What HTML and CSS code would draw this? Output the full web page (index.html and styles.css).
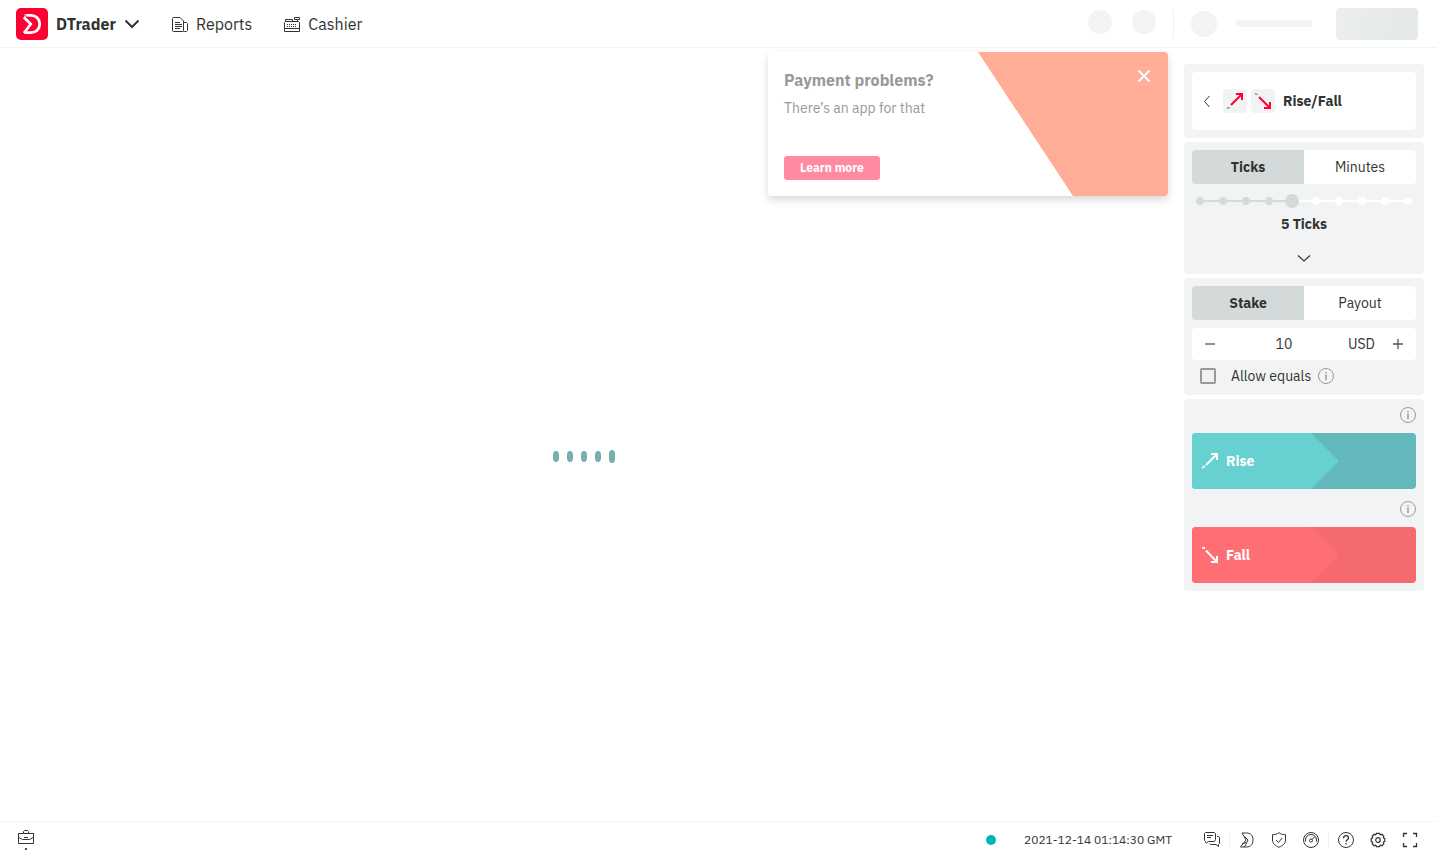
FILE: index.html
```html
<!DOCTYPE html>
<html lang="en">
<head>
<meta charset="utf-8">
<meta name="viewport" content="width=device-width, initial-scale=1">
<title>DTrader</title>
<link rel="stylesheet" href="styles.css">
</head>
<body>
<header class="header">
  <button class="platform" type="button">
    <svg class="platform-logo" viewBox="0 0 32 32" aria-hidden="true"><rect width="32" height="32" rx="5" fill="#ff0032"/><g fill="none" stroke="#fff" stroke-width="2.800"><path d="M8.500 7.400H15c5 0 8.700 3.400 8.700 8.600S20 24.600 15 24.600H8.500"/><path d="M7.800 9.300 14.800 16 8 25"/></g><path d="M8 5.500 17 16" stroke="#ff0032" stroke-width=".8"/></svg>
    <span>DTrader</span>
    <svg class="icon" viewBox="0 0 16 16" aria-hidden="true"><path d="M1.500 4.500 8 11l6.500-6.500" stroke-width="2"/></svg>
  </button>
  <nav class="nav">
    <a class="nav-link" href="#reports">
      <svg class="icon" viewBox="0 0 16 16" aria-hidden="true"><path d="M11.500 15.500h-10a1 1 0 0 1-1-1V2.500a1 1 0 0 1 1-1H8L11.500 5v9.500a1 1 0 0 0 1 1h2l1-1v-7l-1-1h-3M3 6.500h5M3 8.500h7M3 10.500h7M3 12.500h5"/></svg>
      Reports
    </a>
    <a class="nav-link" href="#cashier">
      <svg class="icon" viewBox="0 0 16 16" aria-hidden="true"><path d="M.5 12.500v-6l1-1V3.500h7v2M1.500 5.500h13l1 1v9H.5v-3h15M10.500 1.500h5v2h-5zM13.500 3.500v2"/><path d="M3 8.500h10M3 10.500h10" stroke-dasharray="1 1"/></svg>
      Cashier
    </a>
  </nav>
  <div class="account" aria-hidden="true">
    <span class="bone bone-dot"></span>
    <span class="bone bone-dot"></span>
    <span class="account-divider"></span>
    <span class="bone bone-avatar"></span>
    <span class="bone bone-line"></span>
    <span class="bone bone-button"></span>
  </div>
</header>

<main class="trade">
  <section class="chart" aria-label="Chart">
    <div class="loader" role="status" aria-label="Loading"><i></i><i></i><i></i><i></i><i></i></div>
    <aside class="banner">
      <svg class="banner-art" viewBox="0 0 190 144" preserveAspectRatio="none" aria-hidden="true"><path d="M0 0h190v144H95z" fill="#ffad97"/></svg>
      <h2 class="banner-title">Payment problems?</h2>
      <p class="banner-text">There’s an app for that</p>
      <button class="banner-action" type="button">Learn more</button>
      <button class="banner-close" type="button" aria-label="Close"><svg class="icon" viewBox="0 0 16 16"><path d="m2.500 2.500 11 11m0-11-11 11" stroke-width="2"/></svg></button>
    </aside>
  </section>

  <form class="sidebar">
    <section class="panel">
      <button class="contract" type="button">
        <svg class="icon" viewBox="0 0 16 16" aria-hidden="true"><path d="M10.500 3 5.500 8.500l5 5.500"/></svg>
        <span class="contract-icons">
          <svg class="contract-icon" viewBox="0 0 24 24" aria-hidden="true"><path d="M4 18h3v1.200H5.500V20H4z" fill="#77afb1"/><path d="M8 16 18.500 5.500M13 5h6v6" fill="none" stroke="#ff0032" stroke-width="2"/></svg>
          <svg class="contract-icon" viewBox="0 0 24 24" aria-hidden="true"><path d="M4 4h1.500v.8H7V6H4z" fill="#77afb1"/><path d="M8 8 18.500 18.500M13 19h6v-6" fill="none" stroke="#ff0032" stroke-width="2"/></svg>
        </span>
        <span>Rise/Fall</span>
      </button>
    </section>

    <section class="panel">
      <div class="tabs">
        <button class="tab tab-active" type="button">Ticks</button>
        <button class="tab" type="button">Minutes</button>
      </div>
      <div class="duration">
        <div class="duration-dots" aria-hidden="true"><i class="on"></i><i class="on"></i><i class="on"></i><i class="on"></i><i class="on"></i><i></i><i></i><i></i><i></i><i></i></div>
        <input class="duration-range" id="duration" type="range" min="1" max="10" value="5">
      </div>
      <label class="duration-label" for="duration">5 Ticks</label>
      <button class="expand" type="button" aria-label="Expand"><svg class="icon" viewBox="0 0 16 16"><path d="M2 5.500 8 11l6-5.500" stroke-width="1.200"/></svg></button>
    </section>

    <section class="panel">
      <div class="tabs">
        <button class="tab tab-active" type="button">Stake</button>
        <button class="tab" type="button">Payout</button>
      </div>
      <div class="amount">
        <button class="amount-step" type="button" aria-label="Decrease"><svg class="icon" viewBox="0 0 16 16"><path d="M3 8h10" stroke-width="1.300"/></svg></button>
        <input class="amount-input" type="text" value="10" aria-label="Stake amount">
        <span class="amount-currency">USD</span>
        <button class="amount-step" type="button" aria-label="Increase"><svg class="icon" viewBox="0 0 16 16"><path d="M3 8h10M8 3v10" stroke-width="1.300"/></svg></button>
      </div>
      <div class="equals">
        <input class="equals-box" id="equals" type="checkbox">
        <label for="equals">Allow equals</label>
        <svg class="icon info" viewBox="0 0 16 16" aria-hidden="true"><circle cx="8" cy="8" r="7.500"/><path d="M8 6.500V12M8 4v1.200" stroke-width="1.500"/></svg>
      </div>
    </section>

    <section class="panel">
      <div class="purchase">
        <svg class="icon info" viewBox="0 0 16 16" aria-hidden="true"><circle cx="8" cy="8" r="7.500"/><path d="M8 6.500V12M8 4v1.200" stroke-width="1.500"/></svg>
        <button class="buy buy-rise" type="button">
          <span class="buy-main"><svg class="icon" viewBox="0 0 16 16" aria-hidden="true"><path d="M0 14.500h1.500M1.500 13.500H3M4 12 14.500 1.500M9 1h6v6" stroke-width="2"/></svg>Rise</span>
        </button>
      </div>
      <div class="purchase">
        <svg class="icon info" viewBox="0 0 16 16" aria-hidden="true"><circle cx="8" cy="8" r="7.500"/><path d="M8 6.500V12M8 4v1.200" stroke-width="1.500"/></svg>
        <button class="buy buy-fall" type="button">
          <span class="buy-main"><svg class="icon" viewBox="0 0 16 16" aria-hidden="true"><path d="M0 .5h1.500M1.500 1H3M4 3.500 14.500 14.500M9 15h6V9" stroke-width="2"/></svg>Fall</span>
        </button>
      </div>
    </section>
  </form>
</main>

<footer class="footer">
  <button class="footer-button positions" type="button" aria-label="Positions">
    <svg class="icon" viewBox="0 0 16 16"><path d="M.5 3.500h15v10H.5zM5.500 3.500v-2l1-1h3l1 1v2M.5 7c2 2 4 2.500 5.500 2.500h4c1.500 0 3.500-.5 5.500-2.500M6 7.500h4"/></svg>
    <span class="positions-dot"></span>
  </button>
  <span class="network" role="img" aria-label="Online"></span>
  <time class="clock" datetime="2021-12-14T01:14:30Z">2021-12-14 01:14:30 GMT</time>
  <div class="footer-group">
    <button class="footer-button" type="button" aria-label="Live chat"><svg class="icon" viewBox="0 0 16 16"><path d="M1.500 10.500v-1l-1-1v-7l1-1h9l1 1v6l-1 2H4.500l-2 1.500zM3 3.500h6M3 5.500h4M13 4.500h1.500l1 1v6l-1 1v2L12 12.500H6.500l-1-1"/></svg></button>
  </div>
  <div class="footer-group">
    <a class="footer-button" href="#deriv" aria-label="Deriv"><svg class="icon" viewBox="0 0 16 16"><path d="M3 1h4.500C11.500 1 14 3.500 14 8s-2.500 7-6.500 7H1.500L7 8zM5.500 4.500 9 8l-3.500 7M3 12l4-1.500"/></svg></a>
    <a class="footer-button" href="#limits" aria-label="Responsible trading"><svg class="icon" viewBox="0 0 16 16"><path d="M8 .7C6 2.200 4 2.700 1.500 2.700V8c0 3.500 2.500 5.500 6.500 7.300 4-1.800 6.500-3.800 6.500-7.300V2.700C12 2.700 10 2.200 8 .7zM5 8l2.500 2.500L11 6"/></svg></a>
    <a class="footer-button" href="#account-limits" aria-label="Account limits"><svg class="icon" viewBox="0 0 16 16"><circle cx="8" cy="8" r="7.500"/><path d="M2.500 9.500V8a5.500 5.500 0 0 1 11 0v1.500M9 7.500l2.500-2.500"/><circle cx="8" cy="8.500" r="1.500"/></svg></a>
  </div>
  <div class="footer-group">
    <a class="footer-button" href="#help" aria-label="Help centre"><svg class="icon" viewBox="0 0 16 16"><circle cx="8" cy="8" r="7.500"/><path d="M5.500 6.200C5.500 4.500 6.500 3.700 8 3.700s2.500.9 2.500 2.200C10.500 7.700 8 7.700 8 9.800M8 11v1.500" stroke-width="1.200"/></svg></a>
    <button class="footer-button" type="button" aria-label="Settings"><svg class="icon" viewBox="0 0 16 16"><path d="M6.500 1.300h3l.7 1.500 1.700-.5 1.900 1.900-.5 1.600 1.500.8v2.800l-1.500.8.5 1.600-1.900 1.900-1.700-.5-.7 1.500h-3l-.7-1.500-1.700.5-1.900-1.900.5-1.600-1.500-.8V6.600l1.500-.8-.5-1.600 1.900-1.900 1.700.5z" stroke-width="1.200"/><circle cx="8" cy="8" r="2.300" stroke-width="1.200"/></svg></button>
    <button class="footer-button" type="button" aria-label="Full screen"><svg class="icon" viewBox="0 0 16 16"><path d="M1.500 5V1.500H5M11 1.500h3.500V5M14.500 11v3.500H11M5 14.500H1.500V11" stroke-width="1.300"/></svg></button>
  </div>
</footer>
</body>
</html>
```
FILE: styles.css
```css
* { box-sizing: border-box; }

body {
  margin: 0;
  min-height: 100vh;
  display: flex;
  flex-direction: column;
  background: #fff;
  color: #333;
  font: 14px/20px "IBM Plex Sans", Roboto, sans-serif;
}

button, input {
  margin: 0;
  padding: 0;
  border: 0;
  background: none;
  color: inherit;
  font: inherit;
}

button { cursor: pointer; }
a { color: inherit; text-decoration: none; }

.icon {
  width: 16px;
  height: 16px;
  flex: none;
  display: block;
  fill: none;
  stroke: currentColor;
}

.header {
  display: flex;
  align-items: center;
  height: 48px;
  padding: 0 18px 0 16px;
  border-bottom: 1px solid #f2f3f4;
  font-size: 16px;
  line-height: 24px;
}

.platform {
  display: flex;
  align-items: center;
  gap: 8px;
  font-weight: 700;
}

.platform-logo { width: 32px; height: 32px; }

.nav {
  display: flex;
  gap: 32px;
  margin-left: 32px;
}

.nav-link {
  display: flex;
  align-items: center;
  gap: 8px;
}

.account {
  display: flex;
  align-items: center;
  margin-left: auto;
}

.bone { background: #f2f3f4; }
.bone-dot { width: 24px; height: 24px; margin: 0 20px 4px 0; border-radius: 50%; }
.account-divider { width: 1px; height: 30px; margin: 0 17px 0 -3px; background: #f2f3f4; }
.bone-avatar { width: 26px; height: 26px; border-radius: 50%; }
.bone-line { width: 76px; height: 7px; margin: 0 24px 0 19px; border-radius: 4px; }
.bone-button { width: 82px; height: 32px; border-radius: 4px; background: linear-gradient(100deg, #eceeef, #e5e9e9 80%); }

.trade {
  flex: 1;
  display: flex;
}

.chart {
  flex: 1;
  position: relative;
  display: flex;
  align-items: center;
  justify-content: center;
  padding-top: 44px;
}

.loader { display: flex; align-items: center; gap: 8px; }
.loader i { width: 6px; height: 11px; border-radius: 3px / 4px; background: #77afb1; }
.loader i:last-child { height: 13px; }

.banner {
  position: absolute;
  top: 4px;
  right: 0;
  width: 400px;
  padding: 16px;
  border-radius: 4px;
  background: #fff;
  box-shadow: 0 4px 8px rgba(0, 0, 0, .15);
  color: #999;
}

.banner-art { position: absolute; top: 0; right: 0; width: 190px; height: 100%; border-radius: 0 4px 4px 0; }
.banner-title { margin: 0 0 4px; font-size: 16px; line-height: 24px; font-weight: 700; }
.banner-text { margin: 0 0 36px; line-height: 24px; }
.banner-action { display: block; padding: 0 16px; border-radius: 3px; background: #ff8aa2; color: #fff; font-size: 12px; line-height: 24px; font-weight: 700; }
.banner-close { position: absolute; top: 16px; right: 16px; color: #fff; }

.sidebar {
  width: 240px;
  display: flex;
  flex-direction: column;
  gap: 4px;
  margin: 16px 12px 0 16px;
}

.panel {
  padding: 8px;
  border-radius: 4px;
  background: #f2f3f4;
}

.contract {
  display: flex;
  align-items: center;
  gap: 8px;
  width: 100%;
  height: 58px;
  padding: 0 7px;
  border-radius: 4px;
  background: #fff;
  font-weight: 700;
}

.contract-icons { display: flex; gap: 4px; }
.contract-icon { width: 24px; height: 24px; border-radius: 4px; background: #f2f3f4; }

.tabs {
  display: flex;
  overflow: hidden;
  border-radius: 4px;
  background: #fff;
}

.tab { flex: 1; line-height: 34px; }
.tab-active { background: #d6dadb; background: #d4dada; font-weight: 700; }

.duration { position: relative; margin-top: 10px; height: 14px; }

.duration-dots {
  display: flex;
  align-items: center;
  justify-content: space-between;
  height: 14px;
  margin: 0 4px;
  background: linear-gradient(90deg, #d6dada 45%, #fff 45%) center / 100% 2px no-repeat;
}

.duration-dots i { width: 8px; height: 8px; border-radius: 50%; background: #fff; }
.duration-dots .on { background: #d6dada; }

.duration-range {
  position: absolute;
  inset: 0 1px;
  width: calc(100% - 2px);
  height: 14px;
  appearance: none;
}

.duration-range::-webkit-slider-thumb { appearance: none; width: 14px; height: 14px; border-radius: 50%; background: #d4dada; }
.duration-range::-moz-range-thumb { width: 14px; height: 14px; border: 0; border-radius: 50%; background: #d4dada; }

.duration-label { display: block; margin-top: 6px; text-align: center; font-weight: 700; }
.expand { display: flex; justify-content: center; width: 100%; margin-top: 16px; }

.amount {
  display: flex;
  align-items: center;
  height: 32px;
  margin-top: 8px;
  padding: 0 8px;
  border-radius: 4px;
  background: #fff;
}

.amount-step { width: 20px; display: flex; justify-content: center; color: #555; }
.amount-input { flex: 1; min-width: 0; text-align: center; }
.amount-currency { margin-right: 13px; }

.equals { display: flex; align-items: center; margin: 6px 8px 1px; }
.equals-box { appearance: none; width: 16px; height: 16px; margin-right: 15px; border: 2px solid #999; border-radius: 2px; }
.info { color: #999; }
.equals .info { margin-left: 7px; }

.purchase + .purchase { margin-top: 12px; }
.purchase .info { margin: 0 0 10px auto; }

.buy { display: block; width: 100%; height: 56px; overflow: hidden; border-radius: 4px; color: #fff; font-weight: 700; }
.buy-main {
  display: flex;
  align-items: center;
  gap: 8px;
  width: 147px;
  height: 100%;
  padding-left: 10px;
  clip-path: polygon(0 0, 119px 0, 100% 50%, 119px 100%, 0 100%);
}
.buy-rise { background: #62b8ba; }
.buy-rise .buy-main { background: #66d1d0; }
.buy-fall { background: #f56a6f; }
.buy-fall .buy-main { background: #ff6e73; }

.footer {
  display: flex;
  align-items: center;
  height: 36px;
  padding: 0 18px;
  border-top: 1px solid #f2f3f4;
}

.footer-button { display: block; }
.positions { margin-right: auto; }
.positions-dot { display: block; width: 2px; height: 2px; margin: 2px auto 0; background: #555; }
.network { width: 10px; height: 10px; border-radius: 50%; background: #00b6b6; }
.clock { margin: 0 32px 0 28px; font-size: 12px; line-height: 16px; }
.footer-group { display: flex; gap: 16px; }
.footer-group + .footer-group { margin-left: 9px; padding-left: 9px; border-left: 1px solid #f2f3f4; }
```
